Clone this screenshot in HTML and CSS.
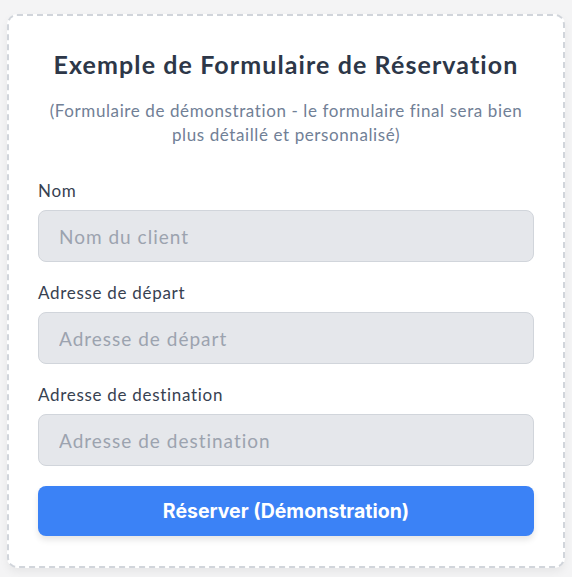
FILE: index.html
```html
<!DOCTYPE html>
<html lang="fr">
<head>
    <meta charset="UTF-8">
    <meta name="viewport" content="width=device-width, initial-scale=1.0">
    <title>Formulaire de Réservation</title>
    <link rel="stylesheet" href="styles.css">
</head>
<body>
    <div class="card">
        <h2>Exemple de Formulaire de Réservation</h2>
        <p class="intro">(Formulaire de démonstration - le formulaire final sera bien plus détaillé et personnalisé)</p>
        <form class="booking-form" onsubmit="return false;">
            <div class="field">
                <label for="nom">Nom</label>
                <input type="text" id="nom" placeholder="Nom du client">
            </div>
            <div class="field">
                <label for="depart">Adresse de départ</label>
                <input type="text" id="depart" placeholder="Adresse de départ">
            </div>
            <div class="field">
                <label for="destination">Adresse de destination</label>
                <input type="text" id="destination" placeholder="Adresse de destination">
            </div>
            <button type="submit">Réserver (Démonstration)</button>
        </form>
    </div>
</body>
</html>
```

FILE: styles.css
```css
body {
    margin: 0;
    padding: 14px 7px 9px 7px;
    background: #f4f4f5;
    font-family: Lato, "Open Sans", sans-serif;
}

.card {
    background: #ffffff;
    border: 2px dashed #d1d5db;
    border-radius: 10px;
    padding: 24px 29px 30px 29px;
    box-shadow: 0 4px 8px rgba(0, 0, 0, 0.06);
}

.card h2 {
    margin: 0;
    text-align: center;
    font-size: 25px;
    letter-spacing: 1.1px;
    line-height: 48px;
    font-weight: 700;
    color: #2d3748;
}

.intro {
    margin: 11px 0 0 0;
    text-align: center;
    font-size: 17px;
    letter-spacing: 0.6px;
    line-height: 24px;
    color: #718096;
}

.booking-form {
    margin-top: 32px;
}

.field {
    margin-bottom: 19px;
}

.field label {
    display: block;
    font-size: 17px;
    letter-spacing: 0.7px;
    line-height: 24px;
    color: #374151;
    margin-bottom: 7px;
}

.field input {
    display: block;
    width: 100%;
    box-sizing: border-box;
    height: 52px;
    padding: 0 20px;
    background: #e5e7eb;
    border: 1px solid #d1d5db;
    border-radius: 8px;
    font-family: inherit;
    font-size: 19px;
    letter-spacing: 1px;
    color: #374151;
}

.field input::placeholder {
    color: #9ca3af;
}

.booking-form button {
    display: block;
    width: 100%;
    height: 50px;
    margin-top: 20px;
    background: #3b82f6;
    color: #ffffff;
    border: none;
    border-radius: 8px;
    font-family: Inter, sans-serif;
    font-size: 19.5px;
    font-weight: 700;
    box-shadow: 0 4px 6px rgba(0, 0, 0, 0.1);
    cursor: pointer;
}
```
